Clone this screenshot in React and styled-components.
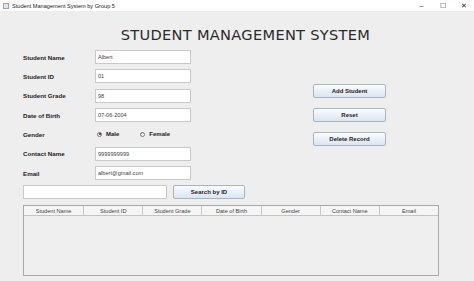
import React from 'react';
import styled, {createGlobalStyle} from 'styled-components';

const GlobalStyle = createGlobalStyle`
    html, body {
        margin:0;
        padding:0;
        background:#eeeeee;
        font-family:"Liberation Sans", Arial, sans-serif;
    }
`;

const Window = styled.div`
    width:474px;
    height:281px;
    display:flex;
    flex-direction:column;
    background:#eeeeee;
    overflow:hidden;
`;

const TitleBar = styled.div`
    height:11px;
    background:#ffffff;
    display:flex;
    align-items:center;
    padding:0 0 0 3px;
    font-size:5.6px;
    color:#222;
`;

const AppIcon = styled.div`
    width:6px;
    height:6px;
    border:1px solid #9aa4b3;
    background:#dfe6ee;
    box-sizing:border-box;
    margin-right:3px;
`;

const TitleText = styled.span`
    flex:1;
`;

const Controls = styled.div`
    display:flex;
    height:100%;
`;

const Control = styled.div`
    width:21px;
    display:flex;
    align-items:center;
    justify-content:center;
    font-size:7px;
    color:#333;
`;

const Content = styled.div`
    flex:1;
    display:flex;
    flex-direction:column;
    padding:0 0 0 23px;
`;

const Heading = styled.h1`
    margin:9px 0 0 0;
    height:30px;
    padding-right:6px;
    text-align:center;
    font-family:"DejaVu Sans", sans-serif;
    font-weight:400;
    font-size:14.6px;
    letter-spacing:0.3px;
    line-height:30px;
    color:#2a2a2a;
`;

const FormArea = styled.div`
    display:flex;
    flex-direction:row;
`;

const Fields = styled.div`
    display:grid;
    grid-template-columns:72px 96px;
    grid-auto-rows:14px;
    row-gap:5.35px;
`;

const Label = styled.div`
    display:flex;
    align-items:center;
    font-size:6.2px;
    font-weight:700;
    color:#222;
`;

const Input = styled.div`
    background:#ffffff;
    border:1px solid #c9c9c9;
    box-sizing:border-box;
    display:flex;
    align-items:center;
    padding-left:2px;
    font-size:5.6px;
    color:#444;
    width:${props => props.w || '96px'};
    height:14px;
`;

const RadioGroup = styled.div`
    display:flex;
    align-items:center;
    gap:21px;
    padding-left:2px;
`;

const RadioOption = styled.label`
    display:flex;
    align-items:center;
    gap:4px;
    font-size:6px;
    font-weight:700;
    color:#222;
`;

const RadioDot = styled.span`
    width:5px;
    height:5px;
    border-radius:50%;
    border:1px solid #777;
    background:#fff;
    box-sizing:border-box;
    position:relative;
    &::after{
        content:"";
        display:${props => (props.checked ? 'block' : 'none')};
        position:absolute;
        left:0.5px;
        top:0.5px;
        width:2px;
        height:2px;
        border-radius:50%;
        background:#222;
    }
`;

const Actions = styled.div`
    display:flex;
    flex-direction:column;
    gap:10px;
    margin:34px 0 0 122px;
`;

const Button = styled.div`
    width:${props => props.w || '73px'};
    height:14px;
    box-sizing:border-box;
    border:1px solid #a7b4c4;
    border-radius:2px;
    background:linear-gradient(#fbfcfe, #dbe5f1);
    display:flex;
    align-items:center;
    justify-content:center;
    font-size:6px;
    font-weight:700;
    color:#222;
`;

const SearchRow = styled.div`
    display:flex;
    gap:6px;
    margin-top:5px;
`;

const Table = styled.div`
    margin-top:6px;
    width:416px;
    height:71px;
    box-sizing:border-box;
    border:1px solid #a8a8a8;
    background:#efefef;
    display:flex;
    flex-direction:column;
`;

const HeaderRow = styled.div`
    display:grid;
    grid-template-columns:repeat(7, 1fr);
    height:9px;
    background:#f5f5f5;
    border-bottom:1px solid #c4c4c4;
`;

const HeaderCell = styled.div`
    display:flex;
    align-items:center;
    justify-content:center;
    font-size:5.6px;
    color:#444;
    border-left:${props => (props.first ? 'none' : '1px solid #c8c8c8')};
`;

const columns = ['Student Name', 'Student ID', 'Student Grade', 'Date of Birth', 'Gender', 'Contact Name', 'Email'];

const fields = [
    ['Student Name', 'Albert'],
    ['Student ID', '01'],
    ['Student Grade', '98'],
    ['Date of Birth', '07-06-2004'],
];

const fieldsAfter = [
    ['Contact Name', '9999999999'],
    ['Email', 'albert@gmail.com'],
];

export default function App() {
    return (
        <Window>
            <GlobalStyle/>
            <TitleBar>
                <AppIcon/>
                <TitleText>Student Management System by Group 5</TitleText>
                <Controls>
                    <Control>–</Control>
                    <Control>☐</Control>
                    <Control>✕</Control>
                </Controls>
            </TitleBar>
            <Content>
                <Heading>STUDENT MANAGEMENT SYSTEM</Heading>
                <FormArea>
                    <Fields>
                        {fields.map(([label, value]) => (
                            <React.Fragment key={label}>
                                <Label>{label}</Label>
                                <Input>{value}</Input>
                            </React.Fragment>
                        ))}
                        <Label>Gender</Label>
                        <RadioGroup>
                            <RadioOption><RadioDot checked/>Male</RadioOption>
                            <RadioOption><RadioDot/>Female</RadioOption>
                        </RadioGroup>
                        {fieldsAfter.map(([label, value]) => (
                            <React.Fragment key={label}>
                                <Label>{label}</Label>
                                <Input>{value}</Input>
                            </React.Fragment>
                        ))}
                    </Fields>
                    <Actions>
                        <Button>Add Student</Button>
                        <Button>Reset</Button>
                        <Button>Delete Record</Button>
                    </Actions>
                </FormArea>
                <SearchRow>
                    <Input w="144px"/>
                    <Button w="72px">Search by ID</Button>
                </SearchRow>
                <Table>
                    <HeaderRow>
                        {columns.map((c, i) => (
                            <HeaderCell key={c} first={i === 0}>{c}</HeaderCell>
                        ))}
                    </HeaderRow>
                </Table>
            </Content>
        </Window>
    );
}
